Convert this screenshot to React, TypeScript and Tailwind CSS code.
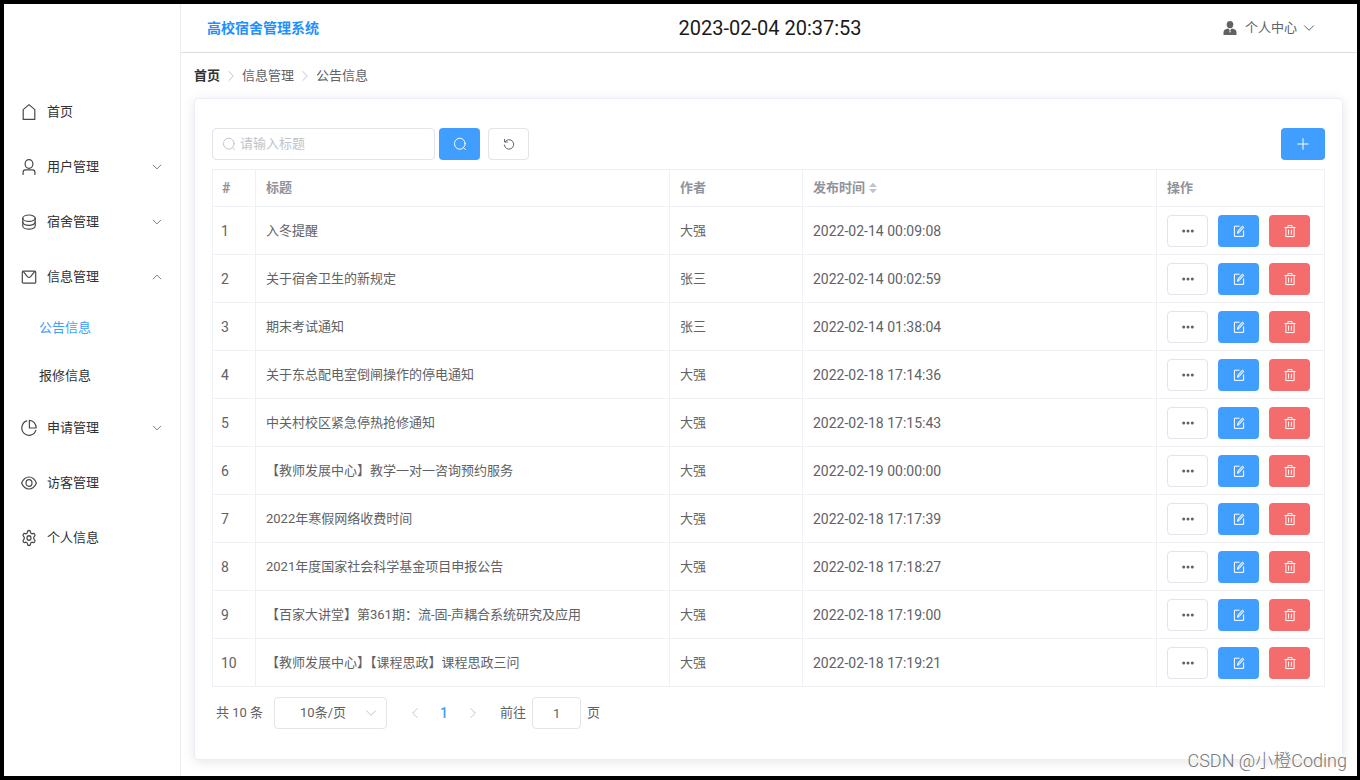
import React, { useState } from 'react';
import { Settings } from 'lucide-react';

type IconProps = { className?: string };

const line = {
  fill: 'none',
  stroke: 'currentColor',
  strokeWidth: 1.2,
  strokeLinecap: 'round' as const,
  strokeLinejoin: 'round' as const,
  'aria-hidden': true,
};

const MenuSvg = ({ children }: { children: React.ReactNode }) => (
  <svg viewBox="0 0 16 18" className="h-[18px] w-4 shrink-0 text-[#48494d]" {...line}>
    {children}
  </svg>
);

const HouseIcon = () => (
  <MenuSvg>
    <path d="M8 1.6 13.8 6.6V16.4H2.2V6.6Z" />
  </MenuSvg>
);
const UserIcon = () => (
  <MenuSvg>
    <ellipse cx="8" cy="6" rx="3.9" ry="4.3" />
    <path d="M2.1 16.4v-2.1q0-2.4 2.3-2.4h7.2q2.3 0 2.3 2.4v2.1" />
  </MenuSvg>
);
const CoinIcon = () => (
  <MenuSvg>
    <ellipse cx="8" cy="5.2" rx="6.2" ry="3.2" />
    <path d="M1.8 5.2v7.8c0 1.8 2.8 3.2 6.2 3.2s6.2-1.4 6.2-3.2V5.2" />
    <path d="M1.8 9.1C1.8 10.9 4.6 12.3 8 12.3s6.2-1.4 6.2-3.2" />
  </MenuSvg>
);
const MailIcon = () => (
  <MenuSvg>
    <rect x="1.3" y="3.2" width="13.4" height="12" rx="1" />
    <path d="M2.6 3.8 6.4 8.6Q8 10.2 9.6 8.6L13.4 3.8" />
  </MenuSvg>
);
const PieIcon = () => (
  <MenuSvg>
    <path d="M5.8 1.9A7.2 7.4 0 1 0 14.8 11.4" />
    <path d="M8.4 1.4V9H15.2A6.9 7.6 0 0 0 8.4 1.4Z" />
  </MenuSvg>
);
const EyeIcon = () => (
  <MenuSvg>
    <path d="M.6 9C2.2 5.2 5 3 8 3S13.8 5.2 15.4 9C13.8 12.8 11 15 8 15S2.2 12.8.6 9Z" />
    <ellipse cx="8" cy="9" rx="3" ry="3.3" />
  </MenuSvg>
);
const GearIcon = () => (
  <Settings className="h-[18px] w-4 shrink-0 text-[#48494d]" strokeWidth={1.8} preserveAspectRatio="none" aria-hidden />
);

const Chevron = ({ className }: IconProps) => (
  <svg viewBox="0 0 12 12" className={className} {...line} strokeWidth={1}>
    <path d="M1.5 3.8 6 8.3 10.5 3.8" />
  </svg>
);
const SearchIcon = ({ className }: IconProps) => (
  <svg viewBox="0 0 14 14" className={className} {...line} strokeWidth={1}>
    <ellipse cx="6.8" cy="6.7" rx="5.3" ry="5.5" />
    <path d="M10.6 10.8 12.4 12.6" />
  </svg>
);
const ResetIcon = () => (
  <svg viewBox="0 0 14 14" className="h-3.5 w-3.5" {...line} strokeWidth={1}>
    <path d="M3 4.8A4.7 4.8 0 1 1 2.3 8M2.6 2.3V5H5.4" />
  </svg>
);
const PlusIcon = () => (
  <svg viewBox="0 0 14 14" className="h-3.5 w-3.5" {...line} strokeWidth={1}>
    <path d="M7 1.5V12.5M1.8 7H12.2" />
  </svg>
);
const EditIcon = () => (
  <svg viewBox="0 0 14 14" className="h-3.5 w-3.5" {...line} strokeWidth={1}>
    <path d="M7.2 2.2H2.4V12.4H11.6V6.8" />
    <path d="M5.5 9 6 7 10.4 2 11.8 3.3 7.3 8.4Z" fill="currentColor" fillOpacity="0.4" />
  </svg>
);
const TrashIcon = () => (
  <svg viewBox="0 0 14 14" className="h-3.5 w-3.5" {...line} strokeWidth={1}>
    <path d="M1.8 3.5H12.2M5 3.3V1.5H9V3.3M2.9 3.6V12.6H11.1V3.6M5.6 6V10.2M8.4 6V10.2" />
  </svg>
);
const MoreIcon = () => (
  <svg viewBox="0 0 14 14" className="h-3.5 w-3.5" fill="currentColor" aria-hidden>
    <circle cx="2.7" cy="7" r="1.5" />
    <circle cx="7" cy="7" r="1.5" />
    <circle cx="11.3" cy="7" r="1.5" />
  </svg>
);
const PersonIcon = () => (
  <svg viewBox="0 0 14 16" className="h-4 w-3.5" fill="currentColor" aria-hidden>
    <ellipse cx="7" cy="4.6" rx="3.3" ry="3.7" />
    <path d="M.5 15V12.5Q.5 9.8 3.3 9L5.3 8.6 7 10.6 8.7 8.6 10.7 9Q13.5 9.8 13.5 12.5V15Z" />
    <path d="M7 10.2 7.7 11 7 13.2 6.3 11Z" fill="#fff" />
  </svg>
);

const menu = [
  { label: '首页', Icon: HouseIcon },
  { label: '用户管理', Icon: UserIcon, group: true },
  { label: '宿舍管理', Icon: CoinIcon, group: true },
  { label: '信息管理', Icon: MailIcon, group: true, children: ['公告信息', '报修信息'] },
  { label: '申请管理', Icon: PieIcon, group: true },
  { label: '访客管理', Icon: EyeIcon },
  { label: '个人信息', Icon: GearIcon },
];

const rows = [
  ['入冬提醒', '大强', '2022-02-14 00:09:08'],
  ['关于宿舍卫生的新规定', '张三', '2022-02-14 00:02:59'],
  ['期末考试通知', '张三', '2022-02-14 01:38:04'],
  ['关于东总配电室倒闸操作的停电通知', '大强', '2022-02-18 17:14:36'],
  ['中关村校区紧急停热抢修通知', '大强', '2022-02-18 17:15:43'],
  ['【教师发展中心】教学一对一咨询预约服务', '大强', '2022-02-19 00:00:00'],
  ['2022年寒假网络收费时间', '大强', '2022-02-18 17:17:39'],
  ['2021年度国家社会科学基金项目申报公告', '大强', '2022-02-18 17:18:27'],
  ['【百家大讲堂】第361期：流-固-声耦合系统研究及应用', '大强', '2022-02-18 17:19:00'],
  ['【教师发展中心】【课程思政】课程思政三问', '大强', '2022-02-18 17:19:21'],
];

function Sidebar() {
  const [active, setActive] = useState('公告信息');
  return (
    <nav className="w-[177px] shrink-0 border-r border-[#ebebee] pt-20 text-[#303133]">
      <ul>
        {menu.map(({ label, Icon, group, children }) => (
          <li key={label}>
            <button
              type="button"
              aria-expanded={group ? Boolean(children) : undefined}
              className="flex h-[55px] w-full items-center pr-[18px] pl-[17px]"
            >
              <Icon />
              <span className="ml-2.5 flex-1 text-left">{label}</span>
              {group && (
                <Chevron className={children ? 'h-2.5 w-2.5 rotate-180 text-[#606266]' : 'h-2.5 w-2.5 text-[#606266]'} />
              )}
            </button>
            {children && (
              <ul>
                {children.map((child) => (
                  <li key={child}>
                    <button
                      type="button"
                      onClick={() => setActive(child)}
                      className={
                        active === child
                          ? 'h-12 w-full pl-[35px] text-left text-[#409eff]'
                          : 'h-12 w-full pl-[35px] text-left'
                      }
                    >
                      {child}
                    </button>
                  </li>
                ))}
              </ul>
            )}
          </li>
        ))}
      </ul>
    </nav>
  );
}

function Header() {
  return (
    <header className="flex h-[49px] items-center border-b border-[#dcdcdc] pr-6 pl-[26px]">
      <h1 className="flex-1 text-sm font-bold text-[#1e90ff]">高校宿舍管理系统</h1>
      <time className="text-xl text-[#1a1a1a]">2023-02-04 20:37:53</time>
      <div className="flex flex-1 justify-end">
        <button type="button" className="flex items-center pr-[18px] text-[#606266]">
          <PersonIcon />
          <span className="mr-1.5 ml-2">个人中心</span>
          <Chevron className="h-3 w-3" />
        </button>
      </div>
    </header>
  );
}

function Breadcrumb() {
  return (
    <nav aria-label="位置" className="flex h-[45px] items-center gap-[5px] px-[13px] text-[#606266]">
      <a href="#home" className="font-bold text-[#303133]">首页</a>
      <Chevron className="h-3 w-3 -rotate-90 text-[#c0c4cc]" />
      <span>信息管理</span>
      <Chevron className="h-3 w-3 -rotate-90 text-[#c0c4cc]" />
      <span>公告信息</span>
    </nav>
  );
}

function Toolbar() {
  return (
    <div className="flex items-center">
      <label className="flex h-8 w-[223px] items-center gap-1 rounded border border-[#e2e4ea] px-[9px]">
        <SearchIcon className="h-3.5 w-3.5 shrink-0 text-[#c0c4cc]" />
        <input
          type="text"
          aria-label="标题"
          placeholder="请输入标题"
          className="w-full min-w-0 bg-transparent outline-none placeholder:text-[#c0c4cc]"
        />
      </label>
      <button
        type="button"
        aria-label="搜索"
        className="ml-1 flex h-8 w-[41px] items-center justify-center rounded bg-[#409eff] text-white"
      >
        <SearchIcon className="h-3.5 w-3.5" />
      </button>
      <button
        type="button"
        aria-label="重置"
        className="ml-2 flex h-8 w-[41px] items-center justify-center rounded border border-[#e2e4ea] text-[#606266]"
      >
        <ResetIcon />
      </button>
      <button
        type="button"
        aria-label="新增"
        className="ml-auto flex h-8 w-11 items-center justify-center rounded bg-[#409eff] text-white"
      >
        <PlusIcon />
      </button>
    </div>
  );
}

function NoticeTable() {
  return (
    <table className="mt-[9px] w-full table-fixed border-separate border-spacing-0 border-t border-l border-[#eff1f7] text-left">
      <colgroup>
        <col className="w-[43px]" />
        <col />
        <col className="w-[133px]" />
        <col className="w-[354px]" />
        <col className="w-[168px]" />
      </colgroup>
      <thead className="text-[#909399]">
        <tr className="h-[37px]">
          <th className="border-r border-b border-[#eff1f7] pl-[9px] text-sm font-bold">#</th>
          <th className="border-r border-b border-[#eff1f7] px-2.5 font-bold">标题</th>
          <th className="border-r border-b border-[#eff1f7] px-2.5 font-bold">作者</th>
          <th className="border-r border-b border-[#eff1f7] px-2.5 font-bold">
            <button type="button" className="flex items-center gap-1 font-bold">
              发布时间
              <svg viewBox="0 0 8 12" className="h-3 w-2" fill="#c0c4cc" aria-hidden>
                <path d="M4 .8 8 5H0ZM4 11.2 0 7H8Z" />
              </svg>
            </button>
          </th>
          <th className="border-r border-b border-[#eff1f7] px-2.5 font-bold">操作</th>
        </tr>
      </thead>
      <tbody>
        {rows.map(([title, author, date], i) => (
          <tr key={date} className="h-12">
            <td className="border-r border-b border-[#eff1f7] pl-2 text-sm">{i + 1}</td>
            <td className="truncate border-r border-b border-[#eff1f7] px-2.5">{title}</td>
            <td className="border-r border-b border-[#eff1f7] px-2.5">{author}</td>
            <td className="border-r border-b border-[#eff1f7] px-2.5 text-sm">{date}</td>
            <td className="border-r border-b border-[#eff1f7] pl-2.5">
              <div className="flex gap-2.5">
                <button
                  type="button"
                  aria-label="详情"
                  className="flex h-8 w-[41px] items-center justify-center rounded border border-[#e2e4ea] text-[#606266]"
                >
                  <MoreIcon />
                </button>
                <button
                  type="button"
                  aria-label="编辑"
                  className="flex h-8 w-[41px] items-center justify-center rounded bg-[#409eff] text-white"
                >
                  <EditIcon />
                </button>
                <button
                  type="button"
                  aria-label="删除"
                  className="flex h-8 w-[41px] items-center justify-center rounded bg-[#f56c6c] text-white"
                >
                  <TrashIcon />
                </button>
              </div>
            </td>
          </tr>
        ))}
      </tbody>
    </table>
  );
}

function Pagination() {
  const [page, setPage] = useState('1');
  return (
    <div className="mt-2.5 flex items-center pl-1">
      <span>共 10 条</span>
      <div className="relative ml-[11px]">
        <select
          aria-label="每页条数"
          className="h-8 w-[113px] appearance-none rounded border border-[#e2e4ea] bg-white pl-[25px]"
        >
          <option>10条/页</option>
          <option>20条/页</option>
        </select>
        <Chevron className="pointer-events-none absolute top-2.5 right-2.5 h-3 w-3 text-[#c0c4cc]" />
      </div>
      <button type="button" aria-label="上一页" className="ml-[22px] text-[#c0c4cc]">
        <Chevron className="h-3 w-3 rotate-90" />
      </button>
      <button type="button" aria-current="page" className="w-[46px] text-center text-sm font-medium text-[#409eff]">
        1
      </button>
      <button type="button" aria-label="下一页" className="text-[#c0c4cc]">
        <Chevron className="h-3 w-3 -rotate-90" />
      </button>
      <label className="ml-[21px] flex items-center gap-1.5">
        前往
        <input
          type="text"
          aria-label="页码"
          value={page}
          onChange={(e) => setPage(e.target.value)}
          className="h-8 w-[49px] rounded border border-[#e2e4ea] text-center outline-none"
        />
        页
      </label>
    </div>
  );
}

export default function App() {
  return (
    <div className="relative flex min-h-screen border-4 border-r-[3px] border-black bg-white font-[Roboto,'Noto_Sans_CJK_SC',sans-serif] text-[13px] text-[#606266]">
      <Sidebar />
      <div className="flex min-w-0 flex-1 flex-col">
        <Header />
        <Breadcrumb />
        <main className="mr-3.5 mb-4 ml-[13px] flex-1 rounded border border-[#ebeef5] px-[17px] pt-[29px] pb-5 shadow-[0_2px_12px_rgba(0,0,0,0.1)]">
          <Toolbar />
          <NoticeTable />
          <Pagination />
        </main>
      </div>
      <div className="pointer-events-none absolute right-2.5 bottom-px text-lg font-light text-[#777]">
        CSDN @小橙Coding
      </div>
    </div>
  );
}
